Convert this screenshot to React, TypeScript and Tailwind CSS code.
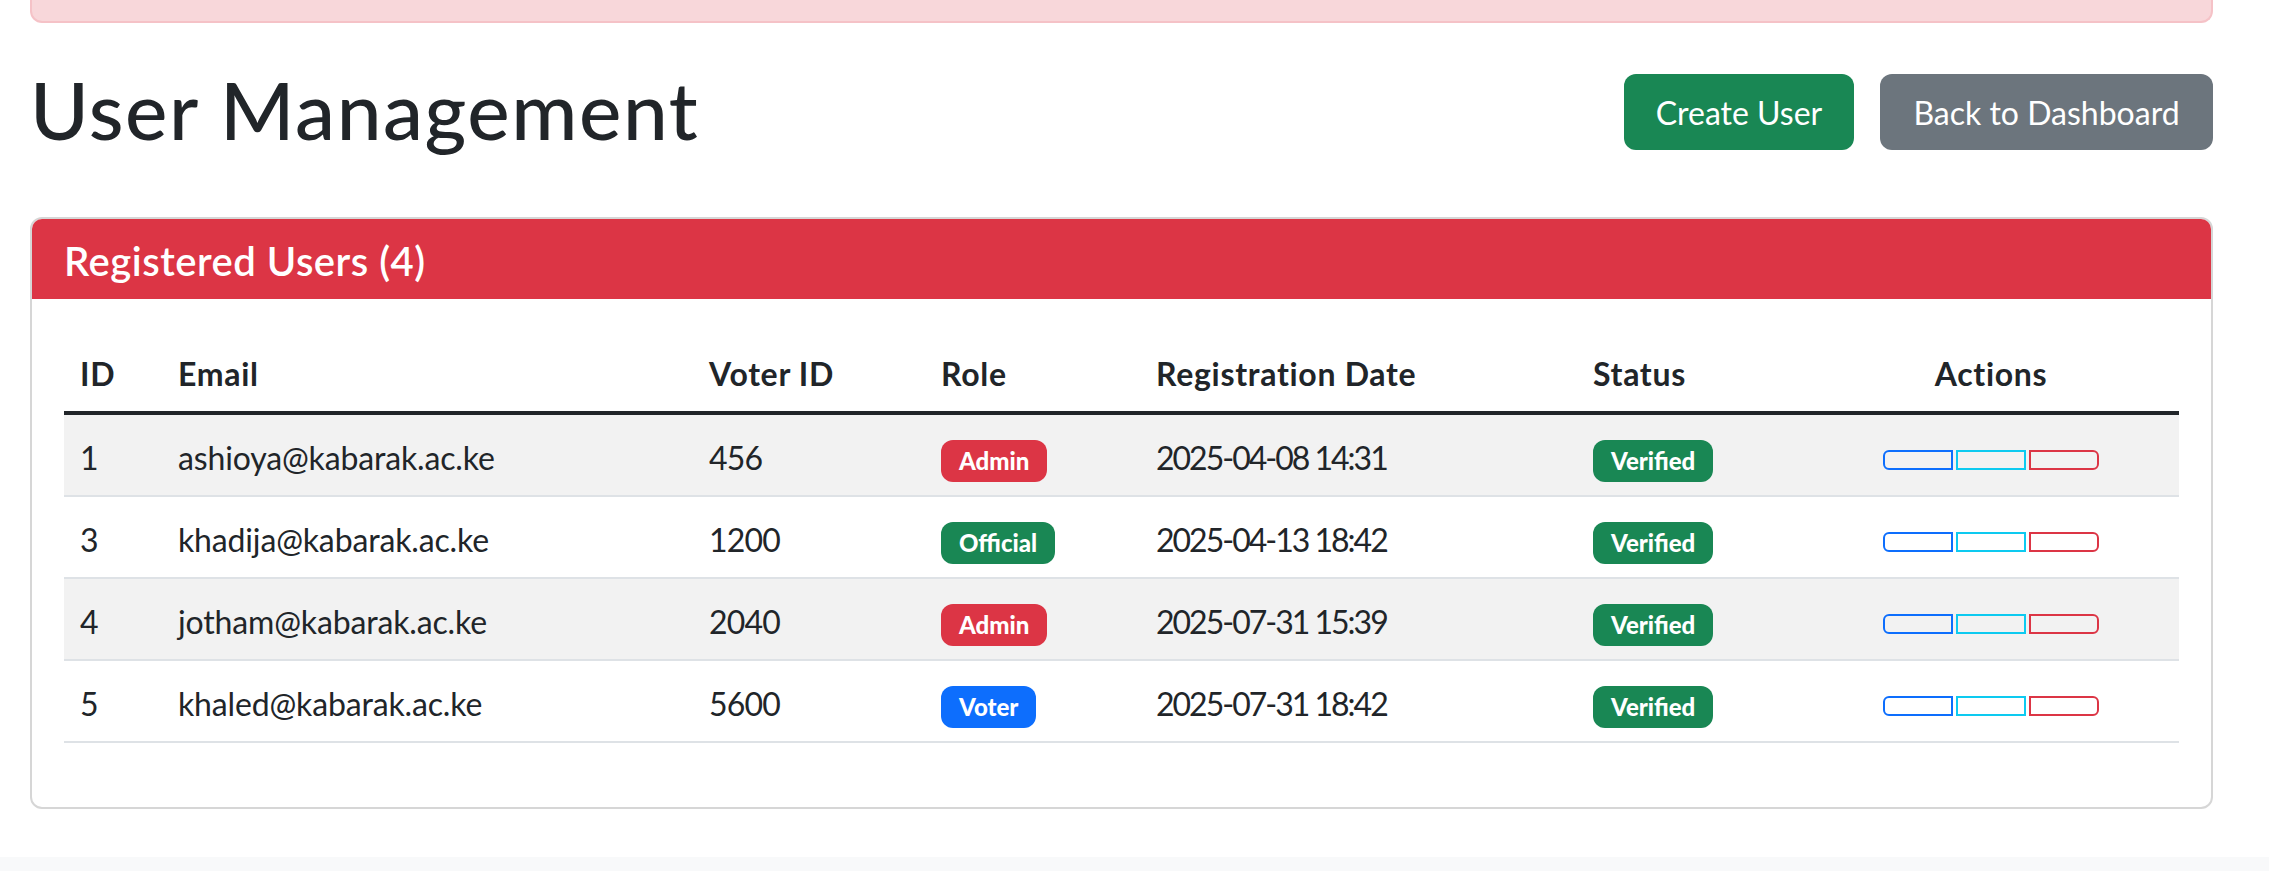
const users = [
  { id: 1, email: 'ashioya@kabarak.ac.ke', voterId: '456', role: 'Admin', date: '2025-04-08 14:31' },
  { id: 3, email: 'khadija@kabarak.ac.ke', voterId: '1200', role: 'Official', date: '2025-04-13 18:42' },
  { id: 4, email: 'jotham@kabarak.ac.ke', voterId: '2040', role: 'Admin', date: '2025-07-31 15:39' },
  { id: 5, email: 'khaled@kabarak.ac.ke', voterId: '5600', role: 'Voter', date: '2025-07-31 18:42' },
]

const roleColors: Record<string, string> = {
  Admin: 'bg-[#dc3545]',
  Official: 'bg-[#198754]',
  Voter: 'bg-[#0d6efd]',
}

const columns = [
  { label: 'ID', className: 'w-[98px] text-left' },
  { label: 'Email', className: 'w-[531px] text-left' },
  { label: 'Voter ID', className: 'w-[232px] text-left' },
  { label: 'Role', className: 'w-[215px] text-left' },
  { label: 'Registration Date', className: 'w-[437px] text-left' },
  { label: 'Status', className: 'w-[226px] text-left' },
  { label: 'Actions', className: 'w-[376px] text-center' },
]

const cell = 'border-b-2 border-[#dee2e6] px-[16px] pt-[19px] pb-[13px] text-[32px] leading-[48px]'

function Badge({ color, children }: { color: string; children: string }) {
  return (
    <span className={`inline-block rounded-[12px] px-[18px] py-[9px] text-[24px] font-black leading-[24px] text-white ${color}`}>
      {children}
    </span>
  )
}

function ActionButtons() {
  return (
    <div className="flex h-[48px] justify-center gap-[3px] pt-[16px]">
      <button type="button" className="h-[20px] w-[70px] rounded-l-[6px] border-2 border-[#0d6efd]" />
      <button type="button" className="h-[20px] w-[70px] border-2 border-[#0dcaf0]" />
      <button type="button" className="h-[20px] w-[70px] rounded-r-[6px] border-2 border-[#dc3545]" />
    </div>
  )
}

export default function App() {
  return (
    <div className="min-h-screen bg-[#f8f9fa] font-['Lato','Open_Sans',sans-serif] text-[#212529]">
      <div className="bg-white pb-[48px] pl-[30px] pr-[56px]">
        {/* alert, cut off at the top */}
        <div className="h-[23px] rounded-b-[12px] border-2 border-t-0 border-[#f5c2c7] bg-[#f8d7da]" />

        <div className="mt-[32px] mb-[50px] flex h-[112px] items-center justify-between">
          <h1 className="mt-[6px] mb-[10px] text-[80px] font-medium leading-[96px] tracking-[1.6px]">User Management</h1>
          <div className="flex gap-[26px] pt-[2px]">
            <button type="button" className="h-[76px] w-[230px] rounded-[12px] bg-[#198754] pt-[2px] text-[32px] leading-[48px] text-white">
              Create User
            </button>
            <button type="button" className="h-[76px] w-[333px] rounded-[12px] bg-[#6c757d] pt-[2px] text-[32px] leading-[48px] text-white">
              Back to Dashboard
            </button>
          </div>
        </div>

        <div className="overflow-hidden rounded-[12px] border-2 border-[#d6d6d6]">
          <div className="bg-[#dc3545] px-[32px] pt-[18px] pb-[14px]">
            <h5 className="text-[40px] font-semibold leading-[48px] tracking-[0.5px] text-white">
              Registered Users ({users.length})
            </h5>
          </div>
          <div className="p-[32px]">
            <table className="mb-[32px] w-full table-fixed border-collapse">
              <thead>
                <tr>
                  {columns.map((c) => (
                    <th
                      key={c.label}
                      className={`border-b-4 border-[#212529] px-[16px] pt-[19px] pb-[13px] text-[32px] font-bold leading-[48px] tracking-[0.7px] ${c.className}`}
                    >
                      {c.label}
                    </th>
                  ))}
                </tr>
              </thead>
              <tbody>
                {users.map((u, i) => (
                  <tr key={u.id} className={i % 2 === 0 ? 'bg-[#f2f2f2]' : 'bg-white'}>
                    <td className={cell}>{u.id}</td>
                    <td className={`${cell} tracking-[-0.15px]`}>{u.email}</td>
                    <td className={`${cell} tracking-[-0.8px]`}>{u.voterId}</td>
                    <td className={cell}>
                      <Badge color={roleColors[u.role]}>{u.role}</Badge>
                    </td>
                    <td className={`${cell} tracking-[-2px]`}>{u.date}</td>
                    <td className={cell}>
                      <Badge color="bg-[#198754]">Verified</Badge>
                    </td>
                    <td className={cell}>
                      <ActionButtons />
                    </td>
                  </tr>
                ))}
              </tbody>
            </table>
          </div>
        </div>
      </div>
    </div>
  )
}
